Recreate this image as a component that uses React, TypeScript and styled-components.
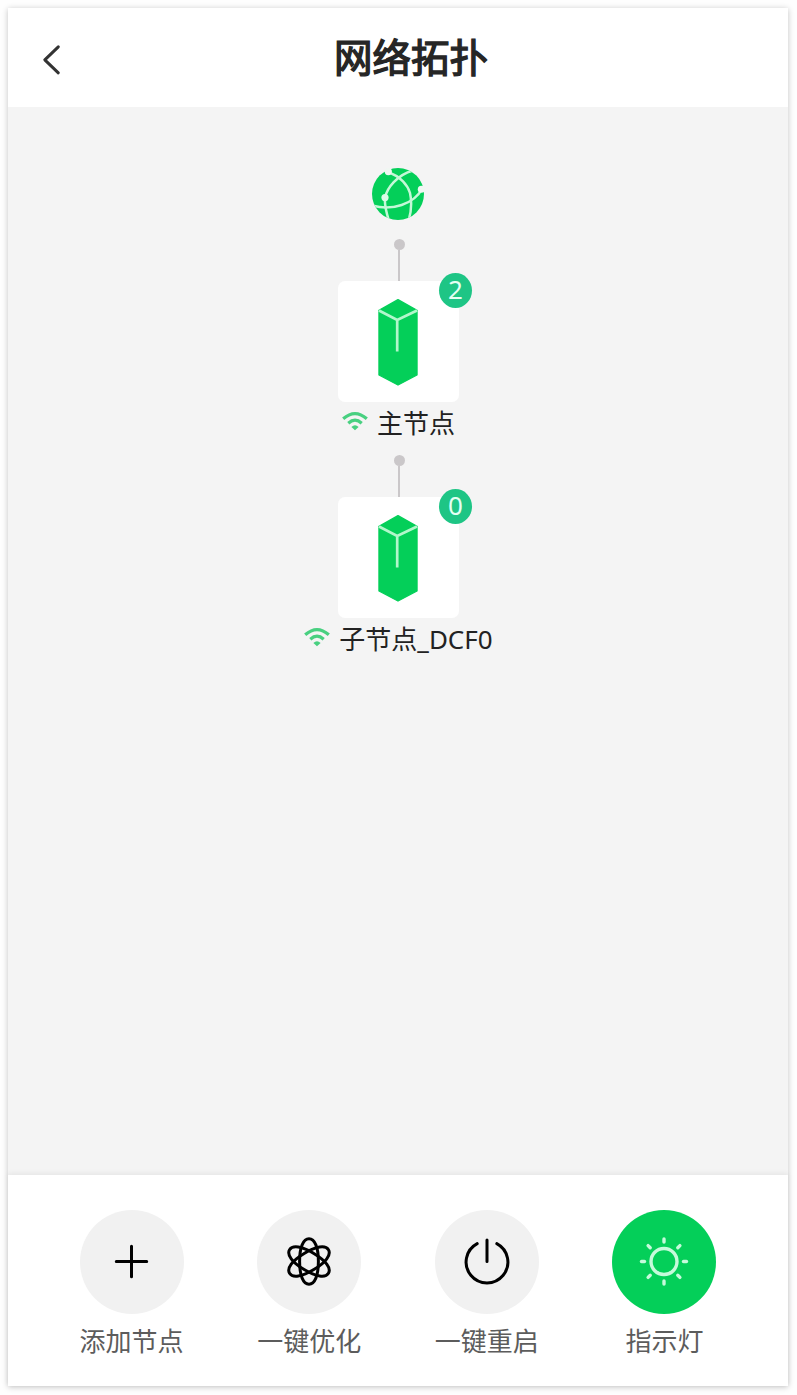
import React from "react";
import styled, { createGlobalStyle } from "styled-components";

const GlobalStyle = createGlobalStyle`
  * { box-sizing: border-box; }
  body {
    margin: 0;
    background: #fefefe;
    font-family: "Noto Sans CJK SC", "Noto Sans", sans-serif;
  }
  svg { display: block; overflow: visible; }
`;

const Screen = styled.div`
  display: flex;
  flex-direction: column;
  width: 780px;
  height: 1378px;
  margin: 8px;
  background: #f4f4f4;
  box-shadow: 0 1px 6px rgba(0, 0, 0, 0.24);
`;

const Header = styled.header`
  display: grid;
  grid-template-columns: 60px 1fr 34px;
  align-items: center;
  height: 99px;
  background: #fff;
`;

const BackButton = styled.button`
  display: flex;
  padding: 4px 0 0 34px;
  border: 0;
  background: none;
`;

const Title = styled.h1`
  margin: 0;
  padding-bottom: 5px;
  font-size: 38.5px;
  line-height: 56px;
  font-weight: 400;
  -webkit-text-stroke: 1.4px #262626;
  text-align: center;
  color: #262626;
`;

const Topology = styled.main`
  flex: 1;
  display: flex;
  flex-direction: column;
  align-items: center;
  gap: 11px;
  padding-top: 61px;
`;

const Globe = styled.div`
  width: 52px;
  height: 52px;
  margin-bottom: 8px;
`;

const Node = styled.section`
  display: flex;
  flex-direction: column;
  align-items: center;
  width: 241px;
  margin-left: 1px;
`;

const Connector = styled.div`
  display: flex;
  flex-direction: column;
  align-items: center;
  width: 11px;
  height: 42px;
  margin-left: 1px;

  &::before {
    content: "";
    width: 11px;
    height: 11px;
    border-radius: 50%;
    background: #cac7c9;
  }

  &::after {
    content: "";
    width: 2px;
    flex: 1;
    background: #cac7c9;
  }
`;

const Card = styled.div`
  position: relative;
  width: 121px;
  height: 121px;
  padding: 18px 0 0 40px;
  border-radius: 7px;
  background: #fff;
`;

const Badge = styled.span`
  position: absolute;
  top: -8.5px;
  right: -13px;
  width: 33px;
  height: 35px;
  border-radius: 50%;
  background: #1ec585;
  color: #e4fff3;
  font-family: "Noto Sans", sans-serif;
  font-size: 26px;
  line-height: 32px;
  text-align: center;
`;

const NodeLabel = styled.div`
  display: flex;
  align-items: center;
  gap: 9px;
  height: 42px;
  font-size: 26px;
  line-height: 40px;
  color: #222;
`;

const NodeName = styled.span`
  height: 42px;
`;

const Latin = styled.span`
  font-family: "Noto Sans", sans-serif;
`;

const WifiSlot = styled.span`
  padding-bottom: 4px;
`;

const Toolbar = styled.footer`
  display: flex;
  justify-content: space-between;
  height: 211px;
  padding: 35px 71.5px 0 71.5px;
  background: #fff;
  box-shadow: 0 -2px 5px rgba(0, 0, 0, 0.06);
`;

const Action = styled.button`
  display: flex;
  flex-direction: column;
  align-items: center;
  width: 104px;
  padding: 0;
  border: 0;
  background: none;
  font: inherit;
`;

const ActionCircle = styled.span<{ $active?: boolean }>`
  display: flex;
  align-items: center;
  justify-content: center;
  width: 104px;
  height: 104px;
  border-radius: 50%;
  background: ${(p) => (p.$active ? "#04cf59" : "#f1f1f1")};
`;

const ActionLabel = styled.span`
  margin-top: 6px;
  font-size: 26px;
  line-height: 40px;
  white-space: nowrap;
  color: #5c5c5c;
`;

const BackIcon = () => (
  <svg width="20" height="30" viewBox="0 0 20 30" fill="none" stroke="#333" strokeWidth="3" strokeLinecap="round" strokeLinejoin="round">
    <path d="M16.300 1.800 2.800 14.800l13.500 13" />
  </svg>
);

const GlobeIcon = () => (
  <svg width="52" height="52" viewBox="0 0 52 52">
    <defs>
      <clipPath id="globe"><circle cx="26" cy="26" r="26" /></clipPath>
    </defs>
    <circle cx="26" cy="26" r="26" fill="#04cf59" />
    <g clipPath="url(#globe)" fill="none" stroke="#c4f8d7" strokeWidth="2.500">
      <path d="M17 53C14.500 45 12.200 37 13 29.700C15 20 25 7 41 2.500" />
      <path d="M15 4C29 8 36 18 38 25C40 34 39.500 43 36.500 53" />
      <path d="M1 37.800C20 43 42 36 50 21" />
    </g>
    <circle cx="13" cy="29.600" r="3.600" fill="#dcfbe7" />
    <g fill="#f0f7f2">
      <circle cx="49.300" cy="21.300" r="3.500" />
      <circle cx="16.300" cy="3.600" r="3.600" />
    </g>
  </svg>
);

const RouterIcon = () => (
  <svg width="40" height="87" viewBox="0 0 40 87">
    <path d="M20 .7 39 11.300V76L20 86 1 76V11.300Z" fill="#04cf59" stroke="#04cf59" strokeWidth="1.400" strokeLinejoin="round" />
    <path d="M1 11.500 19.200 21 39 11.500M19.200 21V52.500" fill="none" stroke="#b2f7cb" strokeWidth="2.700" />
  </svg>
);

const WifiIcon = () => (
  <svg width="26" height="18" viewBox="0 0 26 18" fill="none" stroke="#48d080" strokeWidth="3.200">
    <path d="M1.200 6.800Q13-3.600 24.800 6.800" />
    <path d="M6.300 11.200Q13 5.200 19.700 11.200" />
    <path d="M9.400 15Q13 11.500 16.600 15L13 18.300Z" fill="#48d080" stroke="none" />
  </svg>
);

const lineIcon = {
  width: 50,
  height: 50,
  viewBox: "-25 -25 50 50",
  fill: "none",
  strokeWidth: 3,
  strokeLinecap: "round" as const,
};

const PlusIcon = () => (
  <svg {...lineIcon} stroke="#000"><path d="M-15.700-.5H14.700M-.5-15.700V14.700" /></svg>
);

const AtomIcon = () => (
  <svg {...lineIcon} stroke="#000">
    {[0, -59, 59].map((angle) => (
      <path
        key={angle}
        d="M-9.400 0C-9.400-14-5.800-22.700 0-22.700S9.400-14 9.400 0S5.800 22.700 0 22.700S-9.400 14-9.400 0Z"
        transform={`translate(0 -.5) rotate(${angle})`}
      />
    ))}
  </svg>
);

const PowerIcon = () => (
  <svg {...lineIcon} stroke="#000">
    <path d="M-9.800-18.400A20.900 20.900 0 1 0 9.800-18.400M0-22V-.5" />
  </svg>
);

const SunIcon = () => (
  <svg {...lineIcon} stroke="#c6fadb" strokeWidth="3.400">
    <circle cy="-.5" r="13" />
    {[0, 45, 90, 135, 180, 225, 270, 315].map((angle) => (
      <path key={angle} d="M0-19.500V-22.500" transform={`translate(0 -.5) rotate(${angle})`} />
    ))}
  </svg>
);

const nodes = [
  { name: "主节点", suffix: "", clients: 2 },
  { name: "子节点", suffix: "_DCF0", clients: 0 },
];

const actions = [
  { label: "添加节点", Icon: PlusIcon },
  { label: "一键优化", Icon: AtomIcon },
  { label: "一键重启", Icon: PowerIcon },
  { label: "指示灯", Icon: SunIcon, active: true },
];

export default function App() {
  return (
    <>
      <GlobalStyle />
      <Screen>
        <Header>
          <BackButton aria-label="返回"><BackIcon /></BackButton>
          <Title>网络拓扑</Title>
        </Header>
        <Topology>
          <Globe><GlobeIcon /></Globe>
          {nodes.map((node) => (
            <Node key={node.name}>
              <Connector />
              <Card>
                <RouterIcon />
                <Badge>{node.clients}</Badge>
              </Card>
              <NodeLabel>
                <WifiSlot><WifiIcon /></WifiSlot>
                <NodeName>{node.name}<Latin>{node.suffix}</Latin></NodeName>
              </NodeLabel>
            </Node>
          ))}
        </Topology>
        <Toolbar>
          {actions.map(({ label, Icon, active }) => (
            <Action key={label}>
              <ActionCircle $active={active}><Icon /></ActionCircle>
              <ActionLabel>{label}</ActionLabel>
            </Action>
          ))}
        </Toolbar>
      </Screen>
    </>
  );
}
